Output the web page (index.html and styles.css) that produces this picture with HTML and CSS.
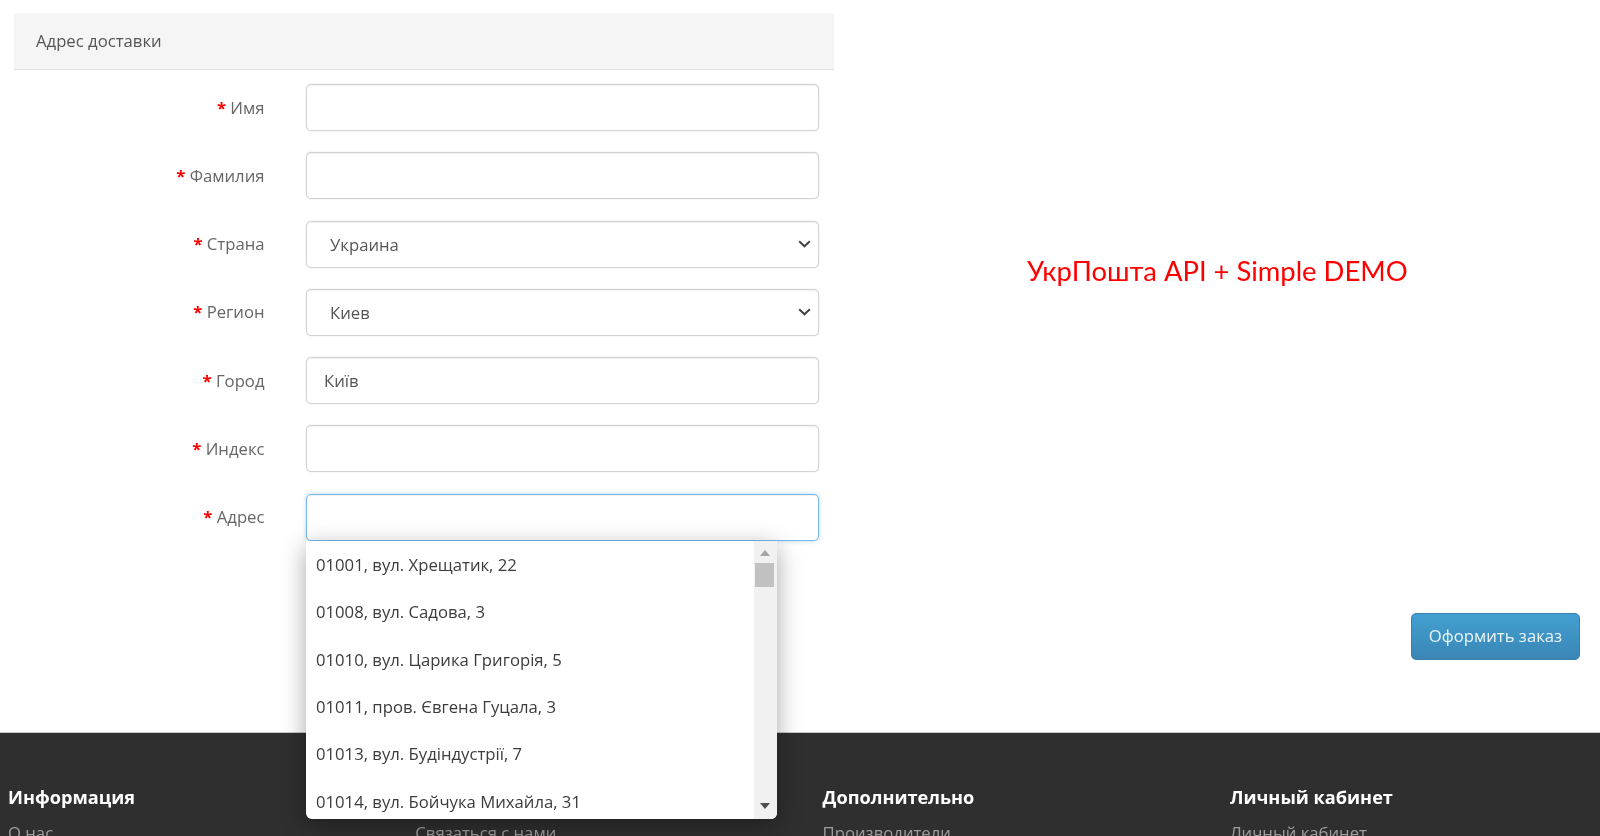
FILE: index.html
```html
<!DOCTYPE html>
<html lang="ru">
<head>
<meta charset="utf-8">
<title>Адрес доставки</title>
<link rel="stylesheet" href="styles.css">
</head>
<body>
<main class="main">
  <section class="address">
    <div class="legend">Адрес доставки</div>
    <form class="form">
      <div class="row"><label class="label"><span class="req">*</span> Имя</label><div class="field"><input class="control" type="text"></div></div>
      <div class="row"><label class="label"><span class="req">*</span> Фамилия</label><div class="field"><input class="control" type="text"></div></div>
      <div class="row"><label class="label"><span class="req">*</span> Страна</label><div class="field"><select class="control select"><option>Украина</option></select></div></div>
      <div class="row"><label class="label"><span class="req">*</span> Регион</label><div class="field"><select class="control select"><option>Киев</option></select></div></div>
      <div class="row"><label class="label"><span class="req">*</span> Город</label><div class="field"><input class="control" type="text" value="Київ"></div></div>
      <div class="row"><label class="label"><span class="req">*</span> Индекс</label><div class="field"><input class="control" type="text"></div></div>
      <div class="row"><label class="label"><span class="req">*</span> Адрес</label>
        <div class="field">
          <input class="control focus" type="text">
          <div class="dropdown">
            <ul class="list">
              <li>01001, вул. Хрещатик, 22</li>
              <li>01008, вул. Садова, 3</li>
              <li>01010, вул. Царика Григорія, 5</li>
              <li>01011, пров. Євгена Гуцала, 3</li>
              <li>01013, вул. Будіндустрії, 7</li>
              <li>01014, вул. Бойчука Михайла, 31</li>
            </ul>
            <div class="scrollbar">
              <svg class="arrow" width="10" height="6" viewBox="0 0 10 6"><path d="M5 0 10 6H0z"/></svg>
              <div class="thumb"></div>
              <svg class="arrow arrow-down" width="10" height="6" viewBox="0 0 10 6"><path d="M0 0H10L5 6z"/></svg>
            </div>
          </div>
        </div>
      </div>
    </form>
  </section>
  <aside class="side">
    <div class="demo">УкрПошта API + Simple DEMO</div>
    <button class="order" type="button">Оформить заказ</button>
  </aside>
</main>
<footer class="footer">
  <div class="col"><h5>Информация</h5><a>О нас</a></div>
  <div class="col"><h5 class="blank">&nbsp;</h5><a>Связаться с нами</a></div>
  <div class="col"><h5>Дополнительно</h5><a>Производители</a></div>
  <div class="col"><h5>Личный кабинет</h5><a>Личный кабинет</a></div>
</footer>
</body>
</html>
```
FILE: styles.css
```css
* { box-sizing: border-box; }
html, body { margin: 0; height: 836px; overflow: hidden; background: #fff; }
body { font-family: "Open Sans", "Noto Sans", sans-serif; font-size: 16.7px; color: #666; filter: blur(0.45px); }

.main { height: 732px; padding: 13px 20px 0 14px; display: grid; grid-template-columns: 820px 1fr; }

.legend { height: 57px; padding-left: 22px; line-height: 55.5px; background: #f5f5f5; border-bottom: 1px solid #e0e0e0; border-radius: 3px 3px 0 0; color: #555; }

.form { display: flex; flex-direction: column; gap: 21.3px; padding-top: 14px; padding-right: 15px; }
.row { display: grid; grid-template-columns: 250.5px 1fr; column-gap: 41.5px; align-items: center; height: 47px; }
.label { text-align: right; padding-bottom: 1px; }
.req { color: #f00; font-weight: 700; }
.field { position: relative; }

.control { display: block; width: 100%; height: 47px; padding: 0 17px; font: inherit; color: #555; background: #fff; border: 1px solid #d2d2d2; border-radius: 5px; box-shadow: inset 0 1px 1px rgba(0,0,0,.06), 0 0 1.5px rgba(0,0,0,.15); outline: none; }
.select { appearance: none; padding-left: 23px; background: #fff url("data:image/svg+xml,%3Csvg xmlns='http://www.w3.org/2000/svg' width='13' height='8' viewBox='0 0 13 8'%3E%3Cpath d='M1.200 1.200 6.500 6.300l5.300-5.100' fill='none' stroke='%23444' stroke-width='2'/%3E%3C/svg%3E") no-repeat right 7px center; }
.focus { border-color: #7db8ea; box-shadow: inset 0 1px 1px rgba(0,0,0,.06), 0 0 4px rgba(102,175,233,.5); }

.dropdown { position: absolute; top: 47px; left: 0; z-index: 5; display: flex; width: 471px; height: 278px; overflow: hidden; background: #fff; border-radius: 0 0 6px 6px; box-shadow: 0 6px 24px rgba(0,0,0,.35); }
.list { flex: 1; margin: 0; padding: 0; list-style: none; color: #3c3c3c; }
.list li { height: 47.4px; padding-left: 10px; line-height: 47.4px; white-space: nowrap; }
.scrollbar { width: 23px; padding-right: 2px; display: flex; flex-direction: column; align-items: center; background: #f1f1f1; }
.arrow { margin-top: 9px; fill: #a3a3a3; flex: none; }
.arrow-down { margin-top: auto; margin-bottom: 10px; fill: #505050; }
.thumb { width: 19px; height: 24px; margin-top: 7px; background: #c1c1c1; }

.side { display: flex; flex-direction: column; }
.demo { margin-top: 238px; padding-left: 193px; font-family: "Lato", "Open Sans", sans-serif; font-size: 27.4px; line-height: 40px; color: #f00; }
.order { align-self: flex-end; margin-top: 322px; width: 169px; height: 47px; padding: 0 0 2px; font: inherit; color: #eaf4fa; background: linear-gradient(#42a0d0, #3a86b5); border: 1px solid #3a80ac; border-radius: 5px; }

.footer { height: 104px; padding: 52px 0 0 8px; display: grid; grid-template-columns: repeat(4, 407.3px); background: #2f2f2f; border-top: 1px solid #c8c8c8; color: #9d9d9d; }
.col h5 { margin: 0 0 11px; font-size: 18.15px; line-height: 24px; font-weight: 700; color: #fff; }
.col a { display: block; line-height: 26px; }
```
